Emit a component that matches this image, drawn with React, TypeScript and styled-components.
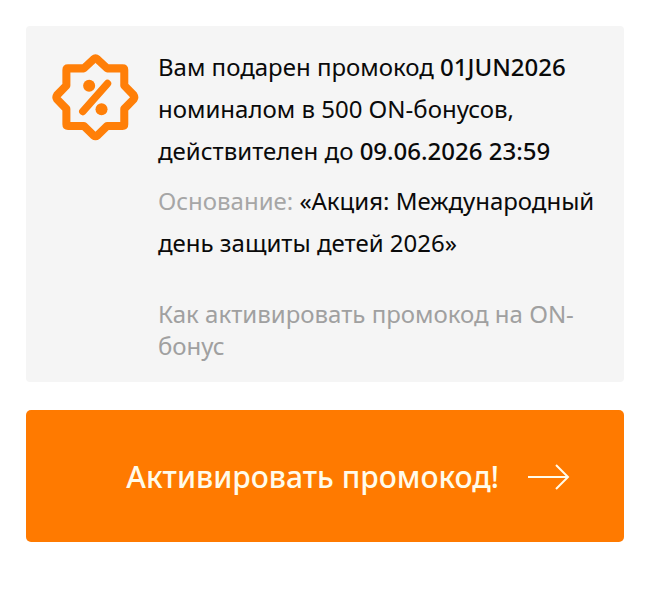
import styled, { createGlobalStyle } from 'styled-components';

const GlobalStyle = createGlobalStyle`
    * {
        box-sizing: border-box;
    }

    body {
        margin: 0;
        background: #fff;
        color: #0a0a0a;
        font-family: 'Noto Sans', sans-serif;
        font-size: 24px;
    }
`;

const Page = styled.main`
    display: flex;
    flex-direction: column;
    gap: 28px;
    padding: 26px;
`;

const Card = styled.section`
    display: flex;
    align-items: flex-start;
    gap: 19px;
    padding: 20px 26px;
    background: #f5f5f5;
    border-radius: 4px;
`;

const BadgeIcon = styled.svg`
    flex: none;
    width: 87px;
    height: 87px;
    margin-top: 8px;
    color: #ff7f08;
`;

const Content = styled.div`
    flex: 1;
    min-width: 0;
`;

const Text = styled.p`
    margin: 0 0 8px;
    line-height: 42px;
`;

const Strong = styled.strong`
    font-weight: 500;
`;

const Muted = styled.span`
    color: #a6a6a6;
`;

const HelpLink = styled.a`
    display: block;
    margin-top: 34px;
    color: #a0a0a0;
    line-height: 32px;
    text-decoration: none;
`;

const ActivateButton = styled.button`
    display: flex;
    align-items: center;
    justify-content: flex-end;
    gap: 28px;
    width: 100%;
    padding: 49px 54px 47px 26px;
    background: #ff7a00;
    border: 0;
    border-radius: 5px;
    color: #fffbea;
    font: inherit;
    font-size: 30px;
    font-weight: 500;
    line-height: 36px;
    cursor: pointer;
`;

const ArrowIcon = styled.svg`
    flex: none;
    width: 43px;
    height: 26px;
`;

function PromoBadge() {
    return (
        <BadgeIcon viewBox="38 43 260 260" fill="none" stroke="currentColor" aria-hidden="true">
            <path
                d="M162 59Q168 54 174 59L203 86H249Q254 86 254 91V137L282 166Q286 172 282 178L254 207V253Q254 258 249 258H203L174 286Q168 291 162 286L133 258H86Q81 258 81 253V207L53 178Q49 172 53 166L81 137V91Q81 86 86 86H133Z"
                strokeWidth="24"
                strokeLinejoin="round"
            />
            <path d="M204 131 130 215" strokeWidth="22" strokeLinecap="round" />
            <circle cx="149" cy="138" r="18" fill="currentColor" stroke="none" />
            <circle cx="186" cy="208" r="18" fill="currentColor" stroke="none" />
        </BadgeIcon>
    );
}

function Arrow() {
    return (
        <ArrowIcon viewBox="0 0 43 26" fill="none" stroke="currentColor" strokeWidth="2" aria-hidden="true">
            <path d="M1 13H41M29 1 41 13 29 25" />
        </ArrowIcon>
    );
}

export default function App() {
    return (
        <>
            <GlobalStyle />
            <Page>
                <Card>
                    <PromoBadge />
                    <Content>
                        <Text>
                            Вам подарен промокод <Strong>01JUN2026</Strong> номиналом в 500 ON-бонусов, действителен до{' '}
                            <Strong>09.06.2026 23:59</Strong>
                        </Text>
                        <Text>
                            <Muted>Основание:</Muted> «Акция: Международный день защиты детей 2026»
                        </Text>
                        <HelpLink href="#activate">Как активировать промокод на ON-бонус</HelpLink>
                    </Content>
                </Card>
                <ActivateButton type="button">
                    Активировать промокод!
                    <Arrow />
                </ActivateButton>
            </Page>
        </>
    );
}
